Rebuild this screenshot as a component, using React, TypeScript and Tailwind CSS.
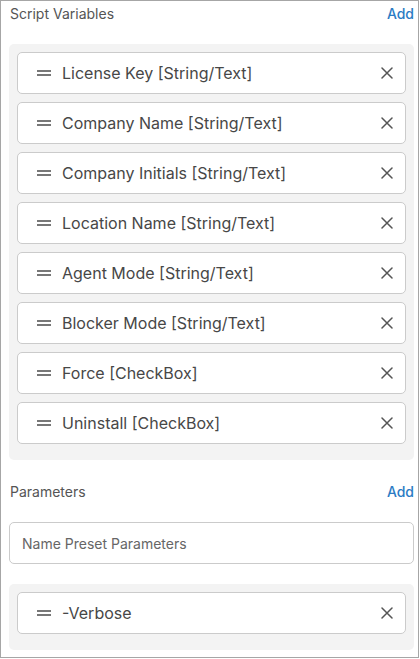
import React from "react";

const vars = [
  "License Key [String/Text]",
  "Company Name [String/Text]",
  "Company Initials [String/Text]",
  "Location Name [String/Text]",
  "Agent Mode [String/Text]",
  "Blocker Mode [String/Text]",
  "Force [CheckBox]",
  "Uninstall [CheckBox]",
];

function Grip() {
  return (
    <svg width="14" height="6" viewBox="0 0 14 6" className="shrink-0">
      <line x1="0" y1="1" x2="14" y2="1" stroke="#555" strokeWidth="1.6" />
      <line x1="0" y1="5" x2="14" y2="5" stroke="#555" strokeWidth="1.6" />
    </svg>
  );
}

function Close() {
  return (
    <svg width="12" height="12" viewBox="0 0 12 12" className="shrink-0">
      <path d="M1 1 L11 11 M11 1 L1 11" stroke="#555" strokeWidth="1.5" strokeLinecap="round" />
    </svg>
  );
}

function Row({ label }: { label: string }) {
  return (
    <div className="mb-2 flex h-[42px] items-center rounded-[5px] border border-[#cbcbcb] bg-white pl-[19px] pr-[12px]">
      <Grip />
      <span className="ml-[11px] flex-1 text-[16px] leading-5 text-[#474747]">{label}</span>
      <Close />
    </div>
  );
}

function Header({ title }: { title: string }) {
  return (
    <div className="flex items-center justify-between pl-[1px] text-[14px] leading-5">
      <span className="text-[#555]">{title}</span>
      <span className="font-medium text-[#2b7bc4]">Add</span>
    </div>
  );
}

export default function App() {
  return (
    <div
      className="h-[658px] w-[419px] overflow-hidden border border-[#a6a6a6] bg-white pl-2 pr-1"
      style={{ fontFamily: "Inter, 'Noto Sans', sans-serif" }}
    >
      <div className="mt-[3px]">
        <Header title="Script Variables" />
      </div>
      <div className="mt-[20px] rounded-[5px] bg-[#f3f3f3] px-2 pb-2 pt-2">
        {vars.map((v) => (
          <Row key={v} label={v} />
        ))}
      </div>
      <div className="mt-[22px]">
        <Header title="Parameters" />
      </div>
      <div className="mt-[20px] flex h-[42px] items-center rounded-[5px] border border-[#cbcbcb] bg-white pl-3 text-[14px] text-[#666]">
        Name Preset Parameters
      </div>
      <div className="mt-[20px] rounded-[5px] bg-[#f3f3f3] px-2 pb-2 pt-2">
        <Row label="-Verbose" />
      </div>
    </div>
  );
}
